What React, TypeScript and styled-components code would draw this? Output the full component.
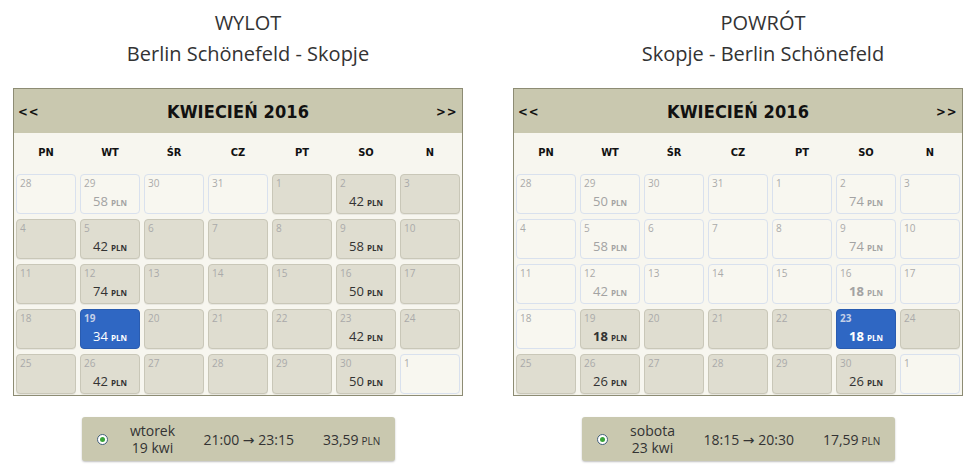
import React from "react";
import styled, { createGlobalStyle, css } from "styled-components";

const Global = createGlobalStyle`
  html, body { margin: 0; padding: 0; background: #ffffff; }
  body { font-family: "Open Sans", "DejaVu Sans", sans-serif; color: #333; overflow: hidden; }
`;

type Kind = "light" | "active" | "selected";
type Day = { d: number; k: Kind; p?: number; b?: boolean };

const Page = styled.div`
  display: flex;
  width: 972px;
  height: 467px;
`;

const Column = styled.div<{ $w: number }>`
  width: ${(p) => p.$w}px;
  flex: none;
  display: flex;
  flex-direction: column;
`;

const Heading = styled.div<{ $offset: number; $w: number }>`
  margin-left: ${(p) => p.$offset}px;
  width: ${(p) => p.$w}px;
  padding-top: 7px;
  text-align: center;
  font-size: 20px;
  line-height: 31px;
  color: #333;
`;

const PanelWrap = styled.div`
  margin-left: 13px;
  margin-top: 19px;
  width: 450px;
  display: flex;
  flex-direction: column;
  align-items: center;
`;

const Panel = styled.div`
  width: 450px;
  box-sizing: border-box;
  border: 1px solid #8d8c74;
  background: #f7f6ef;
  padding-bottom: 1px;
`;

const Header = styled.div`
  height: 44px;
  background: #c9c8af;
  display: flex;
  align-items: center;
  justify-content: space-between;
  padding: 0 4px;
  font-family: "DejaVu Sans Condensed", "DejaVu Sans", sans-serif;
  font-weight: bold;
  color: #111;
`;

const Arrow = styled.span`
  font-size: 13px;
  letter-spacing: 1px;
  width: 22px;
`;

const Title = styled.span`
  font-size: 18px;
  letter-spacing: 0.1px;
`;

const DayNames = styled.div`
  display: grid;
  grid-template-columns: repeat(7, 60px);
  column-gap: 4px;
  padding: 0 2px;
  height: 38px;
  align-items: center;
  font-family: "DejaVu Sans Condensed", "DejaVu Sans", sans-serif;
  font-weight: bold;
  font-size: 11px;
  color: #111;
  text-align: center;
`;

const Grid = styled.div`
  display: grid;
  grid-template-columns: repeat(7, 60px);
  grid-auto-rows: 40px;
  column-gap: 4px;
  row-gap: 5px;
  padding: 3px 2px 0;
`;

const kindStyles = {
  light: css`
    background: #f8f7f0;
    border-color: #d9e1ee;
  `,
  active: css`
    background: #dfddd0;
    border-color: #c9c7b8;
    box-shadow: 0 1px 0 rgba(0, 0, 0, 0.06);
  `,
  selected: css`
    background: #2f67c3;
    border-color: #2a5cb0;
  `,
};

const Cell = styled.div<{ $k: Kind }>`
  box-sizing: border-box;
  border: 1px solid;
  border-radius: 4px;
  padding: 2px 3px 0;
  display: flex;
  flex-direction: column;
  ${(p) => kindStyles[p.$k]}
`;

const DayNum = styled.span<{ $k: Kind }>`
  font-size: 10px;
  line-height: 12px;
  color: ${(p) => (p.$k === "selected" ? "#c3d0e8" : "#aaa")};
  font-weight: ${(p) => (p.$k === "selected" ? "bold" : "normal")};
`;

const Price = styled.span<{ $k: Kind; $b?: boolean }>`
  margin-top: 4px;
  text-align: center;
  font-size: 13px;
  line-height: 16px;
  font-weight: ${(p) => (p.$b ? "bold" : "normal")};
  color: ${(p) =>
    p.$k === "selected" ? "#ffffff" : p.$k === "light" ? "#a3a3a3" : "#333"};
`;

const Unit = styled.span`
  font-size: 8px;
  font-weight: bold;
  margin-left: 3px;
`;

const Summary = styled.div`
  margin-top: 21px;
  width: 313px;
  height: 44px;
  box-sizing: border-box;
  background: #c9c8af;
  border-radius: 3px;
  box-shadow: 0 1px 2px rgba(0, 0, 0, 0.25);
  display: flex;
  align-items: center;
  padding-left: 15px;
  font-size: 14px;
  color: #333;
`;

const Radio = styled.span`
  width: 11px;
  height: 11px;
  box-sizing: border-box;
  border-radius: 50%;
  border: 1px solid #44607c;
  background: #fff;
  display: flex;
  align-items: center;
  justify-content: center;
  flex: none;
  &::after {
    content: "";
    width: 5px;
    height: 5px;
    border-radius: 50%;
    background: #3aa43a;
  }
`;

const DateCol = styled.div`
  width: 60px;
  margin-left: 15px;
  text-align: center;
  line-height: 17px;
`;

const Time = styled.span`
  margin-left: 21px;
  white-space: nowrap;
`;

const Total = styled.span`
  margin-left: 29px;
  white-space: nowrap;
`;

const SumUnit = styled.span`
  font-size: 10px;
  margin-left: 3px;
`;

const L = (d: number, p?: number, b?: boolean): Day => ({ d, k: "light", p, b });
const A = (d: number, p?: number, b?: boolean): Day => ({ d, k: "active", p, b });
const S = (d: number, p?: number, b?: boolean): Day => ({ d, k: "selected", p, b });

const outbound: Day[] = [
  L(28), L(29, 58), L(30), L(31), A(1), A(2, 42), A(3),
  A(4), A(5, 42), A(6), A(7), A(8), A(9, 58), A(10),
  A(11), A(12, 74), A(13), A(14), A(15), A(16, 50), A(17),
  A(18), S(19, 34), A(20), A(21), A(22), A(23, 42), A(24),
  A(25), A(26, 42), A(27), A(28), A(29), A(30, 50), L(1),
];

const inbound: Day[] = [
  L(28), L(29, 50), L(30), L(31), L(1), L(2, 74), L(3),
  L(4), L(5, 58), L(6), L(7), L(8), L(9, 74), L(10),
  L(11), L(12, 42), L(13), L(14), L(15), L(16, 18, true), L(17),
  L(18), A(19, 18, true), A(20), A(21), A(22), S(23, 18, true), A(24),
  A(25), A(26, 26), A(27), A(28), A(29), A(30, 26), L(1),
];

const names = ["PN", "WT", "ŚR", "CZ", "PT", "SO", "N"];

function Calendar({ days }: { days: Day[] }) {
  return (
    <Panel>
      <Header>
        <Arrow>&lt;&lt;</Arrow>
        <Title>KWIECIEŃ 2016</Title>
        <Arrow>&gt;&gt;</Arrow>
      </Header>
      <DayNames>
        {names.map((n) => (
          <span key={n}>{n}</span>
        ))}
      </DayNames>
      <Grid>
        {days.map((day, i) => (
          <Cell key={i} $k={day.k}>
            <DayNum $k={day.k}>{day.d}</DayNum>
            {day.p !== undefined && (
              <Price $k={day.k} $b={day.b}>
                {day.p}
                <Unit>PLN</Unit>
              </Price>
            )}
          </Cell>
        ))}
      </Grid>
    </Panel>
  );
}

function Flight(props: {
  label: string;
  route: string;
  days: Day[];
  weekday: string;
  date: string;
  time: string;
  price: string;
  w: number;
  offset: number;
  hw: number;
}) {
  return (
    <Column $w={props.w}>
      <Heading $offset={props.offset} $w={props.hw}>
        <div>{props.label}</div>
        <div>{props.route}</div>
      </Heading>
      <PanelWrap>
        <Calendar days={props.days} />
        <Summary>
          <Radio />
          <DateCol>
            <div>{props.weekday}</div>
            <div>{props.date}</div>
          </DateCol>
          <Time>{props.time}</Time>
          <Total>
            {props.price}
            <SumUnit>PLN</SumUnit>
          </Total>
        </Summary>
      </PanelWrap>
    </Column>
  );
}

export default function App() {
  return (
    <>
      <Global />
      <Page>
        <Flight
          w={500}
          offset={0}
          hw={496}
          label="WYLOT"
          route="Berlin Schönefeld - Skopje"
          days={outbound}
          weekday="wtorek"
          date="19 kwi"
          time="21:00 → 23:15"
          price="33,59"
        />
        <Flight
          w={472}
          offset={27}
          hw={472}
          label="POWRÓT"
          route="Skopje - Berlin Schönefeld"
          days={inbound}
          weekday="sobota"
          date="23 kwi"
          time="18:15 → 20:30"
          price="17,59"
        />
      </Page>
    </>
  );
}
